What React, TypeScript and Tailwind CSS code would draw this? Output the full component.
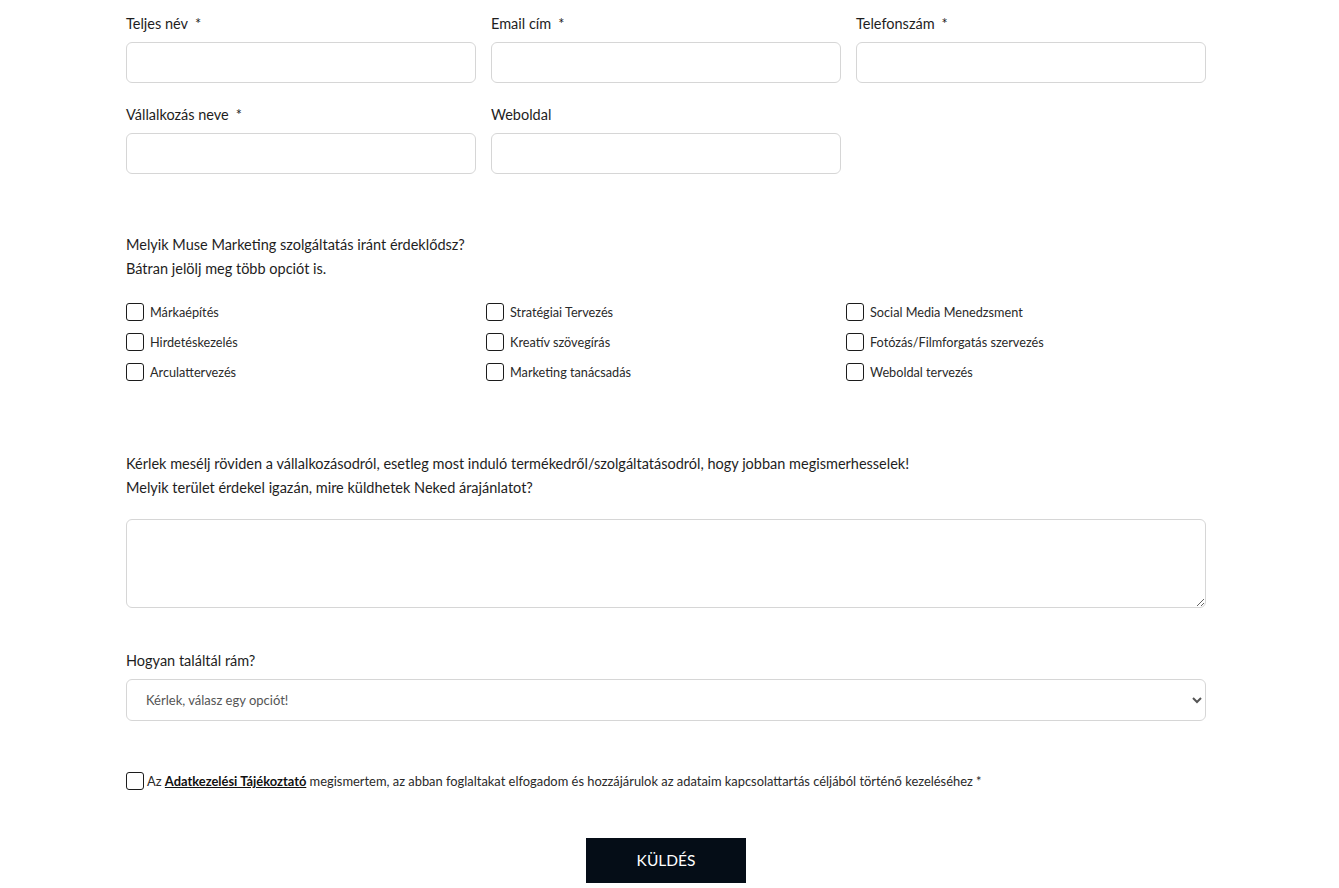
import React from 'react';

const fields = [
    { label: 'Teljes név', required: true },
    { label: 'Email cím', required: true },
    { label: 'Telefonszám', required: true },
    { label: 'Vállalkozás neve', required: true },
    { label: 'Weboldal', required: false },
];

const services = [
    'Márkaépítés',
    'Stratégiai Tervezés',
    'Social Media Menedzsment',
    'Hirdetéskezelés',
    'Kreatív szövegírás',
    'Fotózás/Filmforgatás szervezés',
    'Arculattervezés',
    'Marketing tanácsadás',
    'Weboldal tervezés',
];

const inputStyle = "h-[41px] w-full rounded-[6px] border border-[#d6d6d6] bg-white px-3 outline-none";
const boxStyle = "h-[18px] w-[18px] shrink-0 appearance-none rounded-[3px] border border-[#1c1c1c] bg-white";

export default function App() {
    return (
        <div className="min-h-[888px] bg-white text-[#1e1e1e] font-['Lato','Open_Sans',sans-serif]">
            <form className="ml-[126px] w-[1080px] pt-[11px] pb-[5px]" onSubmit={(e) => e.preventDefault()}>
                <div className="grid grid-cols-3 gap-x-[15px] gap-y-[19px]">
                    {fields.map((f) => (
                        <div key={f.label} className="flex flex-col">
                            <label className="pt-[1px] text-[14.5px] leading-[24px] mb-[6px]">
                                {f.label}{f.required && <span className="ml-[7px]">*</span>}
                            </label>
                            <input type="text" className={inputStyle} />
                        </div>
                    ))}
                </div>

                <p className="mt-[59px] text-[14.5px] leading-[24px]">
                    Melyik Muse Marketing szolgáltatás iránt érdeklődsz?<br />
                    Bátran jelölj meg több opciót is.
                </p>

                <div className="mt-[22px] grid grid-cols-3 gap-y-[12px]">
                    {services.map((s) => (
                        <label key={s} className="flex h-[18px] items-center gap-[6px] text-[12.7px] text-[#2a2a2a]">
                            <input type="checkbox" className={boxStyle} />
                            <span className="pt-[1px]">{s}</span>
                        </label>
                    ))}
                </div>

                <p className="mt-[70px] pt-[1px] text-[14.5px] leading-[24px]">
                    Kérlek mesélj röviden a vállalkozásodról, esetleg most induló termékedről/szolgáltatásodról, hogy jobban megismerhesselek!<br />
                    Melyik terület érdekel igazán, mire küldhetek Neked árajánlatot?
                </p>
                <textarea className="mt-[19px] block h-[89px] w-full rounded-[6px] border border-[#d6d6d6] bg-white p-3 outline-none" />

                <p className="mt-[41px] text-[14.5px] leading-[24px]">Hogyan találtál rám?</p>
                <select className="mt-[6px] block h-[42px] w-full rounded-[6px] border border-[#d6d6d6] bg-white pl-[15px] pr-2 text-[13px] text-[#555] outline-none" defaultValue="">
                    <option value="">Kérlek, válasz egy opciót!</option>
                    <option>Google</option>
                    <option>Instagram</option>
                    <option>Facebook</option>
                    <option>Ajánlás</option>
                </select>

                <label className="mt-[51px] flex h-[18px] items-center gap-[3px] text-[12.9px] text-[#2a2a2a]">
                    <input type="checkbox" className={boxStyle} />
                    <span className="pt-[1px]">
                        Az <a href="#" className="font-bold text-[#111] underline">Adatkezelési Tájékoztató</a> megismertem, az abban foglaltakat elfogadom és hozzájárulok az adataim kapcsolattartás céljából történő kezeléséhez *
                    </span>
                </label>

                <div className="mt-[48px] flex justify-center">
                    <button type="submit" className="h-[45px] w-[160px] bg-[#050d17] pt-[1px] text-[15.5px] text-white">
                        KÜLDÉS
                    </button>
                </div>
            </form>
        </div>
    );
}
